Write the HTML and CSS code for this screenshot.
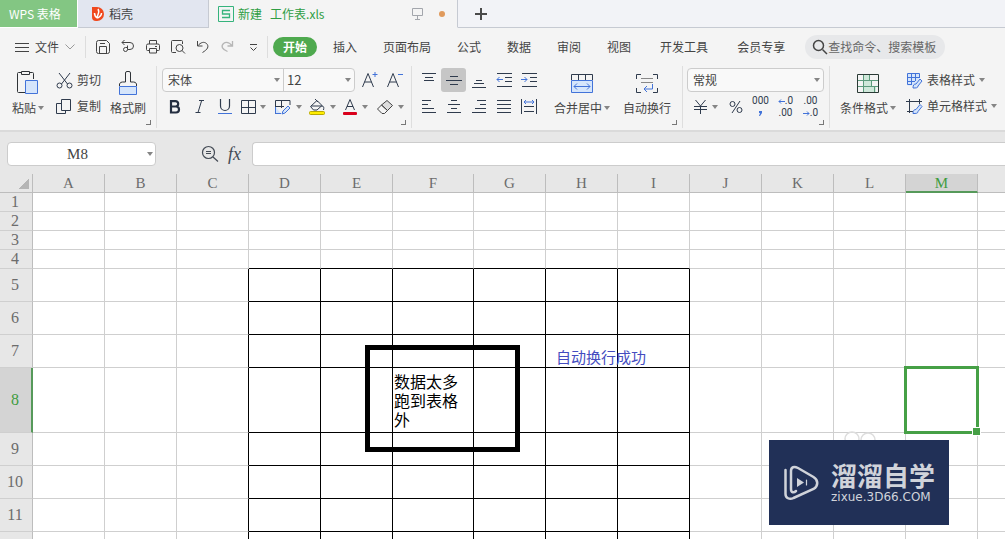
FILE: index.html
```html
<!DOCTYPE html>
<html lang="zh-CN">
<head>
<meta charset="utf-8">
<title>新建 工作表.xls - WPS 表格</title>
<link rel="stylesheet" href="styles.css">
</head>
<body>
<header class="tabs">
  <button class="tab tab-home">WPS 表格</button>
  <button class="tab tab-docer">
    <svg width="14" height="16" viewBox="0 0 14 16"><path d="M1 1h5a7 7 0 0 1 7 7a7 7 0 0 1-7 7h-1a4 4 0 0 1-4-4z" fill="#f0491e"/><path d="M7 3c2 3 0 5-1 8M3.500 7c0 2 1 4 3 5M10.500 7c0 3-2 4-4 5" stroke="#fff" stroke-width="1.500" fill="none"/></svg>
    稻壳
  </button>
  <button class="tab tab-file">
    <svg width="16" height="16" viewBox="0 0 16 16" fill="none" stroke="#35b37c"><path d="M.5.5h15v15H.5z"/><path d="M12 4.500H4.500v3.500h7v3.500H4" stroke-width="1.300"/></svg>
    <span class="file-name">新建&nbsp;&nbsp; 工作表.xls</span>
    <svg class="screen" width="12" height="12" viewBox="0 0 12 12" fill="none" stroke="#a3a6ac"><path d="M.5.5h10v7H.5zM5.500 8v3M3 11.500h5"/></svg>
    <span class="unsaved"></span>
  </button>
  <button class="tab tab-new" aria-label="新建标签"><svg width="12" height="12" viewBox="0 0 12 12" stroke="#4a4a4a" stroke-width="2"><path d="M6 0v12M0 6h12"/></svg></button>
</header>

<nav class="menu">
  <button class="file-menu">
    <svg width="14" height="11" viewBox="0 0 14 11" stroke="#444"><path d="M0 1.500h14M0 5.500h14M0 9.500h14"/></svg>
    文件
    <svg width="10" height="6" viewBox="0 0 10 6" fill="none" stroke="#999"><path d="M.5.5L5 5 9.500.5"/></svg>
  </button>
  <div class="quick">
    <button aria-label="保存"><svg width="16" height="16" viewBox="0 0 16 16"><path d="M3.500 1.500h8l3 3v8a2 2 0 0 1-2 2h-9a2 2 0 0 1-2-2v-9a2 2 0 0 1 2-2zM4.500 14V7.500h7V14M5 4.500h5"/></svg></button>
    <button aria-label="输出"><svg width="16" height="16" viewBox="0 0 16 16"><path d="M2 3.500h8a3.500 3.500 0 0 1 0 7H7.500v-4M4.500 1L2 3.500 4.500 6M7.500 10.500a2 2 0 1 1-2-2h2"/></svg></button>
    <button aria-label="打印"><svg width="16" height="16" viewBox="0 0 16 16"><path d="M4.500 5V1.500h7V5M4 11.500H2.500a1 1 0 0 1-1-1v-4a1.500 1.500 0 0 1 1.500-1.500h10a1.500 1.500 0 0 1 1.500 1.500v4a1 1 0 0 1-1 1H12M4.500 9.500h7v4.500h-7zM10 7.500h2"/></svg></button>
    <button aria-label="打印预览"><svg width="16" height="16" viewBox="0 0 16 16"><path d="M6 13.500H2.500a1 1 0 0 1-1-1v-10a1 1 0 0 1 1-1h9a1 1 0 0 1 1 1V5M12 11.500l3 3"/><circle cx="9.500" cy="9" r="3.500"/></svg></button>
    <button aria-label="撤销"><svg width="16" height="16" viewBox="0 0 16 16"><path d="M2.500 2v5h5M2.500 7C6 3 9 2.500 11.500 4.500c3 3 1 6-4 9"/></svg></button>
    <button class="faded" aria-label="恢复"><svg width="16" height="16" viewBox="0 0 16 16"><path d="M12.500 2v5h-5M12.500 7C9 3 6 2.500 3.500 4.500c-3 3-1 6 4 8" stroke-width="1.300"/></svg></button>
    <button aria-label="更多"><svg width="16" height="16" viewBox="0 0 16 16"><path d="M5 5.500h7M5.500 8.500l3 3 3-3"/></svg></button>
  </div>
  <button class="menu-tab active">开始</button>
  <button class="menu-tab">插入</button>
  <button class="menu-tab">页面布局</button>
  <button class="menu-tab">公式</button>
  <button class="menu-tab">数据</button>
  <button class="menu-tab">审阅</button>
  <button class="menu-tab">视图</button>
  <button class="menu-tab wide">开发工具</button>
  <button class="menu-tab wide">会员专享</button>
  <label class="search">
    <svg width="16" height="16" viewBox="0 0 16 16" fill="none" stroke="#444" stroke-width="1.500"><circle cx="6.500" cy="6.500" r="5"/><path d="M10.500 10.500L15 15"/></svg>
    <input type="text" placeholder="查找命令、搜索模板" aria-label="查找命令、搜索模板">
  </label>
</nav>

<section class="ribbon">
  <div class="group clipboard">
    <button class="big">
      <svg width="24" height="26" viewBox="0 0 24 26" fill="none" stroke="#2f3337"><path d="M11 22.500H2.500a1 1 0 0 1-1-1v-18a1 1 0 0 1 1-1H5.500M13.500 2.500h3a1 1 0 0 1 1 1V9M5.500 1.500h8v3h-8z"/><path d="M9.500 10.500h12v13h-12z" fill="#d5e5fb" stroke="#4273d9"/></svg>
      <span>粘贴<i class="caret"></i></span>
    </button>
    <div class="stack">
      <button class="row-btn"><svg width="17" height="17" viewBox="0 0 17 17" fill="none" stroke="#2f3b4d"><path d="M3 1l8.500 11M14 1L5.500 12"/><circle cx="3.500" cy="13.500" r="2.500"/><circle cx="13.500" cy="13.500" r="2.500"/></svg>剪切</button>
      <button class="row-btn"><svg width="17" height="17" viewBox="0 0 17 17" fill="none" stroke="#2f3b4d"><path d="M5.500 1.500h9v11h-9zM5 5.500H.5v10h9V13"/></svg>复制</button>
    </div>
    <button class="big brush">
      <svg width="20" height="26" viewBox="0 0 20 26" fill="none" stroke="#2f3337"><path d="M1.500 16v-2a3 3 0 0 1 3-2H7.500V3a1.500 1.500 0 0 1 1.500-1.500h2A1.500 1.500 0 0 1 12.500 3v9h3a3 3 0 0 1 3 2v2"/><path d="M1.500 16.500h17v8h-17z" fill="#d5e5fb" stroke="#4273d9"/></svg>
      <span>格式刷</span>
    </button>
    <i class="launcher"></i>
  </div>

  <div class="group font">
    <div class="line">
      <div class="combos">
        <div class="combo face"><select aria-label="字体"><option>宋体</option></select><i class="caret"></i></div>
        <div class="combo size"><select aria-label="字号"><option>12</option></select><i class="caret"></i></div>
      </div>
      <button class="tool" aria-label="增大字号"><svg width="18" height="18" viewBox="0 0 18 18" fill="none" stroke="#2f3b4d"><path d="M1.500 16L7 2.500 12.500 16M3.500 11h7"/><path d="M11.500 3.500h5M14 1v5" stroke="#4273d9"/></svg></button>
      <button class="tool" aria-label="减小字号"><svg width="18" height="18" viewBox="0 0 18 18" fill="none" stroke="#2f3b4d"><path d="M1.500 16L7 2.500 12.500 16M3.500 11h7"/><path d="M12 3.500h5" stroke="#4273d9"/></svg></button>
    </div>
    <div class="line second">
      <button class="tool" aria-label="加粗"><svg width="16" height="16" viewBox="0 0 16 16" fill="none" stroke="#242e40" stroke-width="2.200"><path d="M4 2.100h4.500a2.700 2.700 0 0 1 0 5.400H4zM4 7.500h5a3 3 0 0 1 0 6H4z"/></svg></button>
      <button class="tool" aria-label="倾斜"><svg width="16" height="16" viewBox="0 0 16 16" fill="none" stroke="#2f3b4d"><path d="M7 1.500h5M3.500 13.500h5M9.500 2L6 13.500"/></svg></button>
      <button class="tool" aria-label="下划线"><svg width="16" height="16" viewBox="0 0 16 16" fill="none" stroke="#2f3b4d"><path d="M3.500 0v7a4.500 4.500 0 0 0 9 0V0" stroke-width="1.200"/><path d="M1 14.500h14" stroke="#4273d9"/></svg></button>
      <button class="tool drop" aria-label="边框"><svg width="16" height="16" viewBox="0 0 16 16" fill="none" stroke="#2f3b4d"><path d="M1.500 1.500h14v13h-14zM8.500 1.500v13M1.500 8.500h14"/></svg><i class="caret"></i></button>
      <button class="tool drop" aria-label="绘图边框"><svg width="18" height="16" viewBox="0 0 18 16" fill="none" stroke="#4273d9"><path d="M1.500 15V1.500H16V6M1.500 7.500H10M7.500 1.500V9" stroke="#2f3b4d"/><path d="M1.500 8v6.500H7M8 15l1-3 5-5 2 2-5 5z" fill="#d5e5fb"/></svg><i class="caret"></i></button>
      <button class="tool drop" aria-label="填充颜色"><svg width="18" height="18" viewBox="0 0 18 18" fill="none" stroke="#2f3b4d"><path d="M2.500 8.500L9 2.500l5 5-5 4.500H5.500zM7 1l3 3M3 8h11c2 0 2 2 1.500 4"/><rect x="1.500" y="13.500" width="15" height="3" rx="1" fill="#ffed00" stroke="#b8a800"/></svg><i class="caret"></i></button>
      <button class="tool drop" aria-label="字体颜色"><svg width="16" height="18" viewBox="0 0 16 18" fill="none" stroke="#2f3b4d"><path d="M3.500 12L8 1.500 12.500 12M5 8.500h6"/><rect x="1" y="14" width="14" height="3" rx="1" fill="#d9001b" stroke="none"/></svg><i class="caret"></i></button>
      <button class="tool drop" aria-label="清除"><svg width="18" height="16" viewBox="0 0 18 16" fill="none" stroke="#444"><path d="M5.500 6L11 1.500l5.500 5-5 5z" fill="#ddd"/><path d="M5.500 6l6 5.500-3 3H6L1.500 10z"/></svg><i class="caret"></i></button>
    </div>
    <i class="launcher"></i>
  </div>

  <div class="group align">
    <div class="aligns">
      <button class="tool" aria-label="顶端对齐"><svg width="16" height="16" viewBox="0 0 16 16"><path d="M1 1.500h14M4 5.500h8M3 8.500h10"/></svg></button>
      <button class="tool pressed" aria-label="垂直居中"><svg width="16" height="16" viewBox="0 0 16 16"><path d="M4 4.500h8M0 8.500h16M4 12.500h8"/></svg></button>
      <button class="tool" aria-label="底端对齐"><svg width="16" height="16" viewBox="0 0 16 16"><path d="M5 8.500h6M3 11.500h10M1 15.500h14"/></svg></button>
      <button class="tool" aria-label="减少缩进"><svg width="16" height="16" viewBox="0 0 16 16"><path d="M1 1.500h15M9 5.500h7M9 9.500h7M1 14.500h15"/><path class="blue" d="M7 7.500H1M3.500 5L1 7.500 3.500 10"/></svg></button>
      <button class="tool" aria-label="增加缩进"><svg width="16" height="16" viewBox="0 0 16 16"><path d="M1 1.500h15M9 5.500h7M9 9.500h7M1 14.500h15"/><path class="blue" d="M0 7.500h6M3.500 5L6 7.500 3.500 10"/></svg></button>
      <button class="tool" aria-label="左对齐"><svg width="16" height="16" viewBox="0 0 16 16"><path d="M1 1.500h9M1 5.500h6M1 9.500h12M1 13.500h14"/></svg></button>
      <button class="tool" aria-label="水平居中"><svg width="16" height="16" viewBox="0 0 16 16"><path d="M5 1.500h6M2 5.500h12M5 9.500h6M1 13.500h14"/></svg></button>
      <button class="tool" aria-label="右对齐"><svg width="16" height="16" viewBox="0 0 16 16"><path d="M6 1.500h9M9 5.500h6M4 9.500h11M1 13.500h14"/></svg></button>
      <button class="tool" aria-label="两端对齐"><svg width="16" height="16" viewBox="0 0 16 16"><path d="M1 1.500h14M1 5.500h14M1 9.500h14M1 13.500h14"/></svg></button>
      <button class="tool" aria-label="分散对齐"><svg width="16" height="16" viewBox="0 0 16 16"><path d="M.5 0v15M15.500 0v15M3 7.500h10M3 12.500h10"/><path class="blue" d="M3 3h10M5 1L3 3l2 2M11 1l2 2-2 2"/></svg></button>
    </div>
    <button class="big merge">
      <svg width="24" height="26" viewBox="0 0 24 26" fill="none" stroke="#2f3b4d"><path d="M1.500 10V4.500h21V10M8.500 4.500V10M15.500 4.500V10"/><path d="M1.500 10.500h21v12h-21z" fill="#d5e5fb" stroke="#4273d9"/><path d="M4 16.500h16M7 13.500l-3 3 3 3M17 13.500l3 3-3 3" stroke="#4273d9"/></svg>
      <span>合并居中<i class="caret"></i></span>
    </button>
    <button class="big wrap">
      <svg width="24" height="26" viewBox="0 0 24 26" fill="none" stroke="#2f3b4d"><path d="M6 4.500H1.500V9M18 4.500h4.500V9M6 22.500H1.500V18M18 22.500h4.500V18"/><path d="M6 8.500h12M6 12.500h12" stroke="#888"/><path d="M17.500 14v5H9M12 16l-3 3 3 3" stroke="#4273d9"/></svg>
      <span>自动换行</span>
    </button>
    <i class="launcher"></i>
  </div>

  <div class="group number">
    <div class="combos"><div class="combo format"><select aria-label="数字格式"><option>常规</option></select><i class="caret"></i></div></div>
    <div class="line second">
      <button class="tool drop" aria-label="货币"><svg width="16" height="16" viewBox="0 0 16 16" fill="none" stroke="#2f3b4d"><path d="M3.500 1l5 6 5-6M8.500 7v8M2 7.500h13M2 10.500h13"/></svg><i class="caret"></i></button>
      <button class="tool" aria-label="百分比"><svg width="16" height="16" viewBox="0 0 16 16" fill="none" stroke="#2f3b4d"><circle cx="4.500" cy="5" r="2.500"/><circle cx="11.500" cy="11" r="2.500"/><path d="M12 2L4 14"/></svg></button>
      <button class="tool num" aria-label="千位分隔"><span>000</span><span><svg width="3" height="5" viewBox="0 0 3 5" fill="#4273d9"><path d="M0 0h3v2L1 5H0l1-3H0z"/></svg></span></button>
      <button class="tool num" aria-label="增加小数位数"><span><svg width="7" height="5" viewBox="0 0 7 5" fill="none" stroke="#4273d9"><path d="M7 2.500H1M3 .5l-2 2 2 2"/></svg>.0</span><span>.00</span></button>
      <button class="tool num" aria-label="减少小数位数"><span>.00</span><span><svg width="7" height="5" viewBox="0 0 7 5" fill="none" stroke="#4273d9"><path d="M0 2.500h6M4 .5l2 2-2 2"/></svg>.0</span></button>
    </div>
    <i class="launcher"></i>
  </div>

  <div class="group styles">
    <button class="big">
      <svg width="24" height="26" viewBox="0 0 24 26" fill="none" stroke="#2a3a35"><path d="M8 5h6v5H8zM8 11h8v6H8zM8 17h12v5H8z" fill="#cfe8da" stroke="none"/><path d="M7.500 5v17M13.500 5v6M2 10.500h20M15.500 11v6M8 16.500h14M18.500 17v5M2 16.500h6" stroke="#5c9b7c"/><path d="M1.500 4.500h21v18h-21z"/></svg>
      <span>条件格式<i class="caret"></i></span>
    </button>
    <div class="stack">
      <button class="row-btn"><svg width="17" height="17" viewBox="0 0 17 17" fill="none" stroke="#4273d9"><path d="M1.500 1.500h12v12h-12z" fill="#d5e5fb" stroke="none"/><path d="M1.500 1.500h12V6M1.500 1.500v11H6M5.500 1.500v11M9.500 1.500V9M1.500 5.500h12M1.500 9.500H9"/><path d="M7 16c0-3 1-4 3-4l4-5 2 2-4 5c0 2-2 2-5 2z" fill="#d5e5fb"/></svg>表格样式<i class="caret"></i></button>
      <button class="row-btn"><svg width="17" height="17" viewBox="0 0 17 17" fill="none" stroke="#2f3b4d"><path d="M0 3.500h16M3.500 1v14M13.500 1v5M1 13.500h6"/><path d="M7 15.500c0-3 1-4 3-4l4-5 2 2-4 5c0 2-2 2-5 2z" fill="#d5e5fb" stroke="#4273d9"/></svg>单元格样式<i class="caret"></i></button>
    </div>
  </div>
</section>

<section class="formula-bar">
  <div class="name-box"><input type="text" value="M8" aria-label="名称框"><i class="caret"></i></div>
  <button class="lookup" aria-label="浏览公式"><svg width="18" height="18" viewBox="0 0 18 18" fill="none" stroke="#444b55" stroke-width="1.200"><circle cx="7.500" cy="7.500" r="6"/><path d="M12 12l5 4.500M5 6.500h5M5 8.500h5"/></svg></button>
  <button class="fx">fx</button>
  <input class="formula" type="text" aria-label="编辑栏">
</section>

<main class="sheet">
  <table>
    <colgroup><col class="c-head"><col class="c" span="5"><col class="c-wide"><col class="c" span="7"><col></colgroup>
    <thead><tr><th class="corner"><th>A<th>B<th>C<th>D<th>E<th>F<th>G<th>H<th>I<th>J<th>K<th>L<th class="current">M<th></tr></thead>
    <tbody>
      <tr class="short"><th>1<td><td><td><td><td><td><td><td><td><td><td><td><td><td></tr>
      <tr class="short"><th>2<td><td><td><td><td><td><td><td><td><td><td><td><td><td></tr>
      <tr class="short"><th>3<td><td><td><td><td><td><td><td><td><td><td><td><td><td></tr>
      <tr class="short edge"><th>4<td><td><td><td><td><td><td><td><td><td><td><td><td><td></tr>
      <tr class="ruled"><th>5<td><td><td><td><td><td><td><td><td><td><td><td><td><td></tr>
      <tr class="ruled"><th>6<td><td><td><td><td><td><td><td><td><td><td><td><td><td></tr>
      <tr class="ruled"><th>7<td><td><td><td><td><td><td><td><td><td><td><td><td><td></tr>
      <tr class="ruled tall"><th class="current">8<td><td><td><td><td><td>数据太多跑到表格外<td><td><td><td><td><td><td class="selected"><div class="selection"></div><td></tr>
      <tr class="ruled"><th>9<td><td><td><td><td><td><td><td><td><td><td><td><td><td></tr>
      <tr class="ruled"><th>10<td><td><td><td><td><td><td><td><td><td><td><td><td><td></tr>
      <tr class="ruled"><th>11<td><td><td><td><td><td><td><td><td><td><td><td><td><td></tr>
      <tr class="ruled"><th><td><td><td><td><td><td><td><td><td><td><td><td><td><td></tr>
    </tbody>
  </table>
  <div class="frame"></div>
  <p class="note">自动换行成功</p>
  <svg class="ears" width="32" height="16" viewBox="0 0 32 16" fill="none" stroke="#ddd" stroke-width="1.500"><circle cx="8" cy="8" r="7"/><circle cx="24" cy="9" r="7"/></svg>
  <div class="brand">
    <svg width="36" height="36" viewBox="0 0 36 36" fill="none" stroke="#d0d3da" stroke-width="2.500" stroke-linecap="round"><path d="M2.500 5v24c0 4 4 6 8 4l20-9c5-3 5-9 0-12L15 3C11 1 8 2 8 6v18c0 4 3 4 5 2"/><path d="M14 13l7 4.500-7 4.500z" fill="#d0d3da" stroke="none"/><path d="M23.500 15v5" stroke-width="1.200"/></svg>
    <div class="brand-text"><strong>溜溜自学</strong><span>zixue.3D66.COM</span></div>
  </div>
</main>
</body>
</html>
```
FILE: styles.css
```css
* { box-sizing: border-box; }
body {
  margin: 0;
  height: 100vh;
  display: flex;
  flex-direction: column;
  overflow: hidden;
  background: #f4f4f4;
  color: #444;
  font: 12px/16px "Noto Sans CJK SC", sans-serif;
}
button, input, select { font: inherit; color: inherit; border: 0; padding: 0; margin: 0; background: none; outline: 0; }
button { display: flex; align-items: center; white-space: nowrap; flex: none; }
svg { display: block; flex: none; }
.caret { flex: none; border: 3px solid transparent; border-top: 4px solid #858585; border-bottom: 0; }

/* document tabs */
.tabs { display: flex; flex: none; height: 28px; background: #f2f3f7; }
.tab { border-bottom: 1px solid #c6cad2; }
.tab-home { width: 78px; padding-left: 9px; background: #83c683; color: #fff; border-right: 1px solid #fff; border-bottom-color: #fff; }
.tab-docer { width: 131px; padding-left: 13px; gap: 4px; background: #e2e6f0; border-right: 1px solid #c6cad2; }
.tab-file { width: 249px; padding-left: 9px; gap: 4px; border-right: 1px solid #c6cad2; border-bottom-color: #f4f4f4; background: #f4f4f4; color: #2f9e44; }
.file-name { flex: 1; text-align: left; }
.unsaved { width: 6px; height: 6px; margin: 0 12px 0 11px; border-radius: 3px; background: #e09a5c; }
.tab-new { flex: 1; padding-left: 17px; }

/* menu row */
.menu { display: flex; flex: none; align-items: center; height: 38px; }
.file-menu { width: 86px; height: 22px; padding-left: 15px; gap: 6px; border-right: 1px solid #ddd; }
.quick { display: flex; gap: 9px; width: 182px; padding-left: 9px; border-right: 1px solid #ddd; height: 22px; align-items: center; }
.quick svg { fill: none; stroke: #444; }
.quick .faded { opacity: .35; }
.menu-tab { padding: 0 13px; }
.menu-tab.wide { padding: 0 13px 0 16px; }
.menu-tab.active { height: 20px; margin: 0 3px 0 5px; padding: 0 10px; border-radius: 10px; background: #4ea94e; color: #fff; font-weight: 700; }
.search { display: flex; align-items: center; width: 140px; height: 24px; margin-left: 7px; padding-left: 7px; border-radius: 12px; background: #e7e8ea; }
.search input { flex: 1; min-width: 0; }
.search input::placeholder { color: #666; opacity: 1; }

/* ribbon */
.ribbon { display: flex; flex: none; height: 64px; }
.group { position: relative; flex: none; height: 62px; border-right: 1px solid #dedede; padding-top: 2px; }
.launcher { position: absolute; right: 5px; bottom: 3px; width: 5px; height: 5px; border: solid #777; border-width: 0 1px 1px 0; }
.big { flex-direction: column; gap: 2px; padding-top: 2px; }
.big span { display: flex; align-items: center; gap: 2px; line-height: 20px; }
.stack { display: flex; flex-direction: column; gap: 2px; }
.row-btn { height: 24px; gap: 4px; }
.clipboard { display: flex; width: 157px; padding-left: 12px; align-items: flex-start; }
.clipboard .stack { margin-left: 12px; }
.clipboard .brush { margin-left: 9px; }
.font { width: 255px; padding-left: 5px; }
.line { display: flex; align-items: center; height: 24px; }
.second { margin-top: 3px; }
.combos { display: flex; height: 24px; border: 1px solid #ccc; border-radius: 4px; background: #f9f9f9; }
.combo { display: grid; align-items: center; }
.combo select { grid-area: 1 / 1; appearance: none; width: 100%; padding-left: 5px; }
.combo .caret { grid-area: 1 / 1; justify-self: end; margin-right: 3px; pointer-events: none; }
.face { width: 121px; border-right: 1px solid #ccc; }
.size { width: 70px; }
.size select { padding-left: 3px; font-size: 13px; }
.format { width: 135px; }
.tool { height: 24px; width: 25px; justify-content: center; }
.font .line .combos { margin-right: 2px; }
.drop { width: 34px; justify-content: flex-start; padding-left: 3px; gap: 4px; }
.aligns { display: grid; grid-template-columns: repeat(5, 25px); row-gap: 3px; }
.aligns svg { fill: none; stroke: #2f3b4d; }
.aligns .blue { stroke: #4273d9; }
.pressed { background: #c6c6c6; border-radius: 3px; }
.align { display: flex; width: 271px; padding-left: 4px; align-items: flex-start; }
.merge { margin-left: 13px; }
.wrap { margin-left: 13px; }
.number { width: 147px; padding-left: 4px; }
.number .combos { width: 137px; }
.number .line { padding-left: 2px; }
.num { flex-direction: column; font: 10px/12px Roboto, sans-serif; color: #2f3b4d; }
.num span { display: flex; align-items: center; height: 12px; }
.styles { display: flex; padding-left: 10px; border: 0; align-items: flex-start; }
.styles .stack { margin-left: 10px; }

/* formula bar */
.formula-bar { display: flex; flex: none; align-items: center; height: 44px; padding: 2px 0 0 7px; background: #e7e7e7; border-top: 2px solid #dadada; }
.name-box { display: flex; align-items: center; width: 149px; height: 24px; border: 1px solid #ccc; border-radius: 4px; background: #fff; padding-right: 2px; }
.name-box input { flex: 1; min-width: 0; text-align: center; font: 15px "Liberation Serif", serif; }
.lookup { margin-left: 45px; }
.fx { margin: 0 11px 0 9px; font: italic 18px/20px "Liberation Serif", serif; color: #444b55; }
.formula { flex: 1; height: 24px; border: 1px solid #ccc; border-right: 0; border-radius: 4px 0 0 4px; background: #fff; }

/* grid */
.sheet { position: relative; flex: 1; min-height: 0; overflow: hidden; background: #fff; }
table { width: 100%; table-layout: fixed; border-collapse: separate; border-spacing: 0; }
.c-head { width: 33px; }
.c { width: 72px; }
.c-wide { width: 81px; }
th, td { padding: 0; border: solid #cfcfcf; border-width: 0 1px 1px 0; }
th { background: #e7e7e7; color: #6c6c6c; font: 16px/18px "Liberation Serif", serif; }
thead th { height: 19px; border-color: #bdbdbd; font: 15px/16px "Liberation Serif", serif; }
tbody th { border-right-color: #bdbdbd; padding-right: 2px; }
th:last-child, td:last-child { border-right: 0; }
.corner { background: linear-gradient(135deg, transparent 50%, #b5b5b5 50%) 19px 5px / 10px 10px no-repeat #e7e7e7; }
.current { background: #d4d4d4; color: #3f9c3f; }
thead .current { border-bottom: 2px solid #56995a; }
tbody .current { border-right: 2px solid #56995a; padding-right: 1px; }
.short { height: 19px; }
.ruled { height: 33px; }
.tall { height: 65px; }
td { color: #000; font-size: 16px; line-height: 19px; padding: 0 1px; }
.edge td:nth-child(n+5):nth-child(-n+10) { border-bottom-color: #000; }
.ruled td:nth-child(n+5):nth-child(-n+10) { border-color: #000; }
.ruled td:nth-child(4) { border-right-color: #000; }
.selected { position: relative; }
.selection { position: absolute; inset: -2px; border: 3px solid #46a046; }
.selection::after { content: ""; position: absolute; right: -5px; bottom: -5px; width: 7px; height: 7px; border: 1px solid #fff; background: #46a046; }

/* drawing layer over the cells */
.frame { position: absolute; left: 365px; top: 171px; width: 155px; height: 107px; border: 5px solid #000; }
.note { position: absolute; left: 556px; top: 173px; margin: 0; font-size: 15px; line-height: 20px; color: #444cc0; }
.ears { position: absolute; left: 844px; top: 257px; }
.brand { position: absolute; left: 769px; top: 266px; width: 180px; height: 85px; padding-left: 14px; display: flex; align-items: center; gap: 12px; background: #213057; color: #d0d3da; }
.brand-text { display: flex; flex-direction: column; gap: 1px; }
.brand-text strong { font-size: 26px; line-height: 28px; font-weight: 700; }
.brand-text span { font: 12px/14px "DejaVu Sans", sans-serif; }
```
